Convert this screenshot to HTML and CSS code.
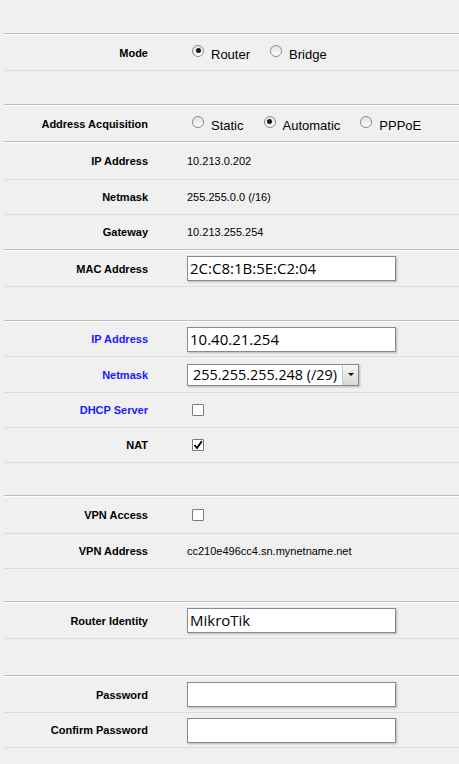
FILE: index.html
```html
<!DOCTYPE html>
<html>
<head>
<meta charset="utf-8">
<link rel="stylesheet" href="styles.css">
</head>
<body>
<div class="form">
  <div class="group">
    <div class="row h35">
      <div class="label">Mode</div>
      <div class="value">
        <label class="opt"><span class="radio on"></span>Router</label>
        <label class="opt"><span class="radio"></span>Bridge</label>
      </div>
    </div>
  </div>
  <div class="spacer"></div>
  <div class="group">
    <div class="row h35 sub">
      <div class="label">Address Acquisition</div>
      <div class="value">
        <label class="opt"><span class="radio"></span>Static</label>
        <label class="opt"><span class="radio on"></span>Automatic</label>
        <label class="opt"><span class="radio"></span>PPPoE</label>
      </div>
    </div>
    <div class="row h36">
      <div class="label">IP Address</div>
      <div class="value text">10.213.0.202</div>
    </div>
    <div class="row">
      <div class="label">Netmask</div>
      <div class="value text">255.255.0.0 (/16)</div>
    </div>
    <div class="row sub">
      <div class="label">Gateway</div>
      <div class="value text">10.213.255.254</div>
    </div>
    <div class="row h35">
      <div class="label">MAC Address</div>
      <div class="value"><div class="input">2C:C8:1B:5E:C2:04</div></div>
    </div>
  </div>
  <div class="spacer"></div>
  <div class="group">
    <div class="row">
      <div class="label blue">IP Address</div>
      <div class="value"><div class="input">10.40.21.254</div></div>
    </div>
    <div class="row h35">
      <div class="label blue">Netmask</div>
      <div class="value">
        <div class="select"><span class="sel-text">255.255.255.248 (/29)</span><span class="sel-btn"><span class="tri"></span></span></div>
      </div>
    </div>
    <div class="row">
      <div class="label blue">DHCP Server</div>
      <div class="value"><span class="check"></span></div>
    </div>
    <div class="row">
      <div class="label">NAT</div>
      <div class="value">
        <span class="check">
          <svg width="10" height="10" viewBox="0 0 10 10"><path d="M1.5 5 L4 8 L8.8 1.2" fill="none" stroke="#000" stroke-width="1.8"/></svg>
        </span>
      </div>
    </div>
  </div>
  <div class="spacer s32"></div>
  <div class="group">
    <div class="row h36">
      <div class="label">VPN Access</div>
      <div class="value"><span class="check"></span></div>
    </div>
    <div class="row">
      <div class="label">VPN Address</div>
      <div class="value text">cc210e496cc4.sn.mynetname.net</div>
    </div>
  </div>
  <div class="spacer s32"></div>
  <div class="group">
    <div class="row h35">
      <div class="label">Router Identity</div>
      <div class="value"><div class="input">MikroTik</div></div>
    </div>
  </div>
  <div class="spacer s36"></div>
  <div class="group">
    <div class="row h35">
      <div class="label">Password</div>
      <div class="value"><div class="input"></div></div>
    </div>
    <div class="row">
      <div class="label">Confirm Password</div>
      <div class="value"><div class="input"></div></div>
    </div>
  </div>
</div>
</body>
</html>
```

FILE: styles.css
```css
html, body {
  margin: 0;
  padding: 0;
  background: #f0f0f0;
}
body {
  font-family: "Liberation Sans", Arial, sans-serif;
  color: #000;
}
.form {
  padding: 33px 0 0 4px;
}
.group {
  border-top: 1px solid #bdbdbd;
  box-shadow: inset 0 1px 0 #ffffff;
  padding-top: 1px;
}
.spacer {
  height: 33px;
}
.spacer.s32 {
  height: 32px;
}
.spacer.s36 {
  height: 36px;
}
.row {
  display: flex;
  align-items: center;
  height: 34px;
  border-bottom: 1px solid #dcdcdc;
}
.row.h35 {
  height: 35px;
}
.row.h36 {
  height: 36px;
}
.row.sub {
  border-bottom: 1px solid #bdbdbd;
  box-shadow: 0 1px 0 #ffffff;
  margin-bottom: 1px;
}
.label {
  width: 144px;
  text-align: right;
  font-size: 11px;
  font-weight: bold;
  flex: none;
}
.label.blue {
  color: #1a1aff;
}
.value {
  padding-left: 39px;
  display: flex;
  align-items: center;
}
.value.text {
  font-size: 11px;
}
.opt {
  display: flex;
  align-items: center;
  font-size: 13px;
  margin-right: 20px;
  position: relative;
  top: 2px;
}
.radio {
  width: 12px;
  height: 12px;
  box-sizing: border-box;
  border-radius: 50%;
  border: 1px solid #8a8a8a;
  background: linear-gradient(#e2e2e2, #ffffff);
  margin: 0 7px 0 0;
  position: relative;
  top: -4px;
  display: inline-block;
}
.opt:first-child .radio {
  margin-left: 5px;
}
.radio.on::after {
  content: "";
  position: absolute;
  left: 2.5px;
  top: 2.5px;
  width: 5px;
  height: 5px;
  border-radius: 50%;
  background: #1a1a1a;
}
.check {
  width: 12px;
  height: 12px;
  box-sizing: border-box;
  border: 1px solid #7a7a7a;
  background: #fff;
  margin-left: 5px;
  display: flex;
  align-items: center;
  justify-content: center;
  border-radius: 1px;
}
.input {
  width: 209px;
  height: 25px;
  box-sizing: border-box;
  border: 1px solid #8a8a8a;
  background: #fff;
  box-shadow: 1px 1px 2px rgba(0,0,0,0.25);
  font-family: "Open Sans", "Noto Sans", sans-serif;
  font-size: 15px;
  line-height: 23px;
  padding-left: 2px;
  white-space: nowrap;
}
.select {
  width: 172px;
  height: 22px;
  box-sizing: border-box;
  border: 1px solid #8a8a8a;
  background: #fff;
  box-shadow: 1px 1px 2px rgba(0,0,0,0.25);
  display: flex;
  font-family: "Open Sans", "Noto Sans", sans-serif;
  font-size: 14.4px;
  line-height: 20px;
}
.sel-text {
  flex: 1;
  padding-left: 5px;
  white-space: nowrap;
  overflow: hidden;
}
.sel-btn {
  width: 15px;
  flex: none;
  background: linear-gradient(#f6f6f6, #d8d8d8);
  border-left: 1px solid #c8c8c8;
  display: flex;
  align-items: center;
  justify-content: center;
}
.tri {
  width: 0;
  height: 0;
  border-left: 3px solid transparent;
  border-right: 3px solid transparent;
  border-top: 3px solid #000;
}
```
